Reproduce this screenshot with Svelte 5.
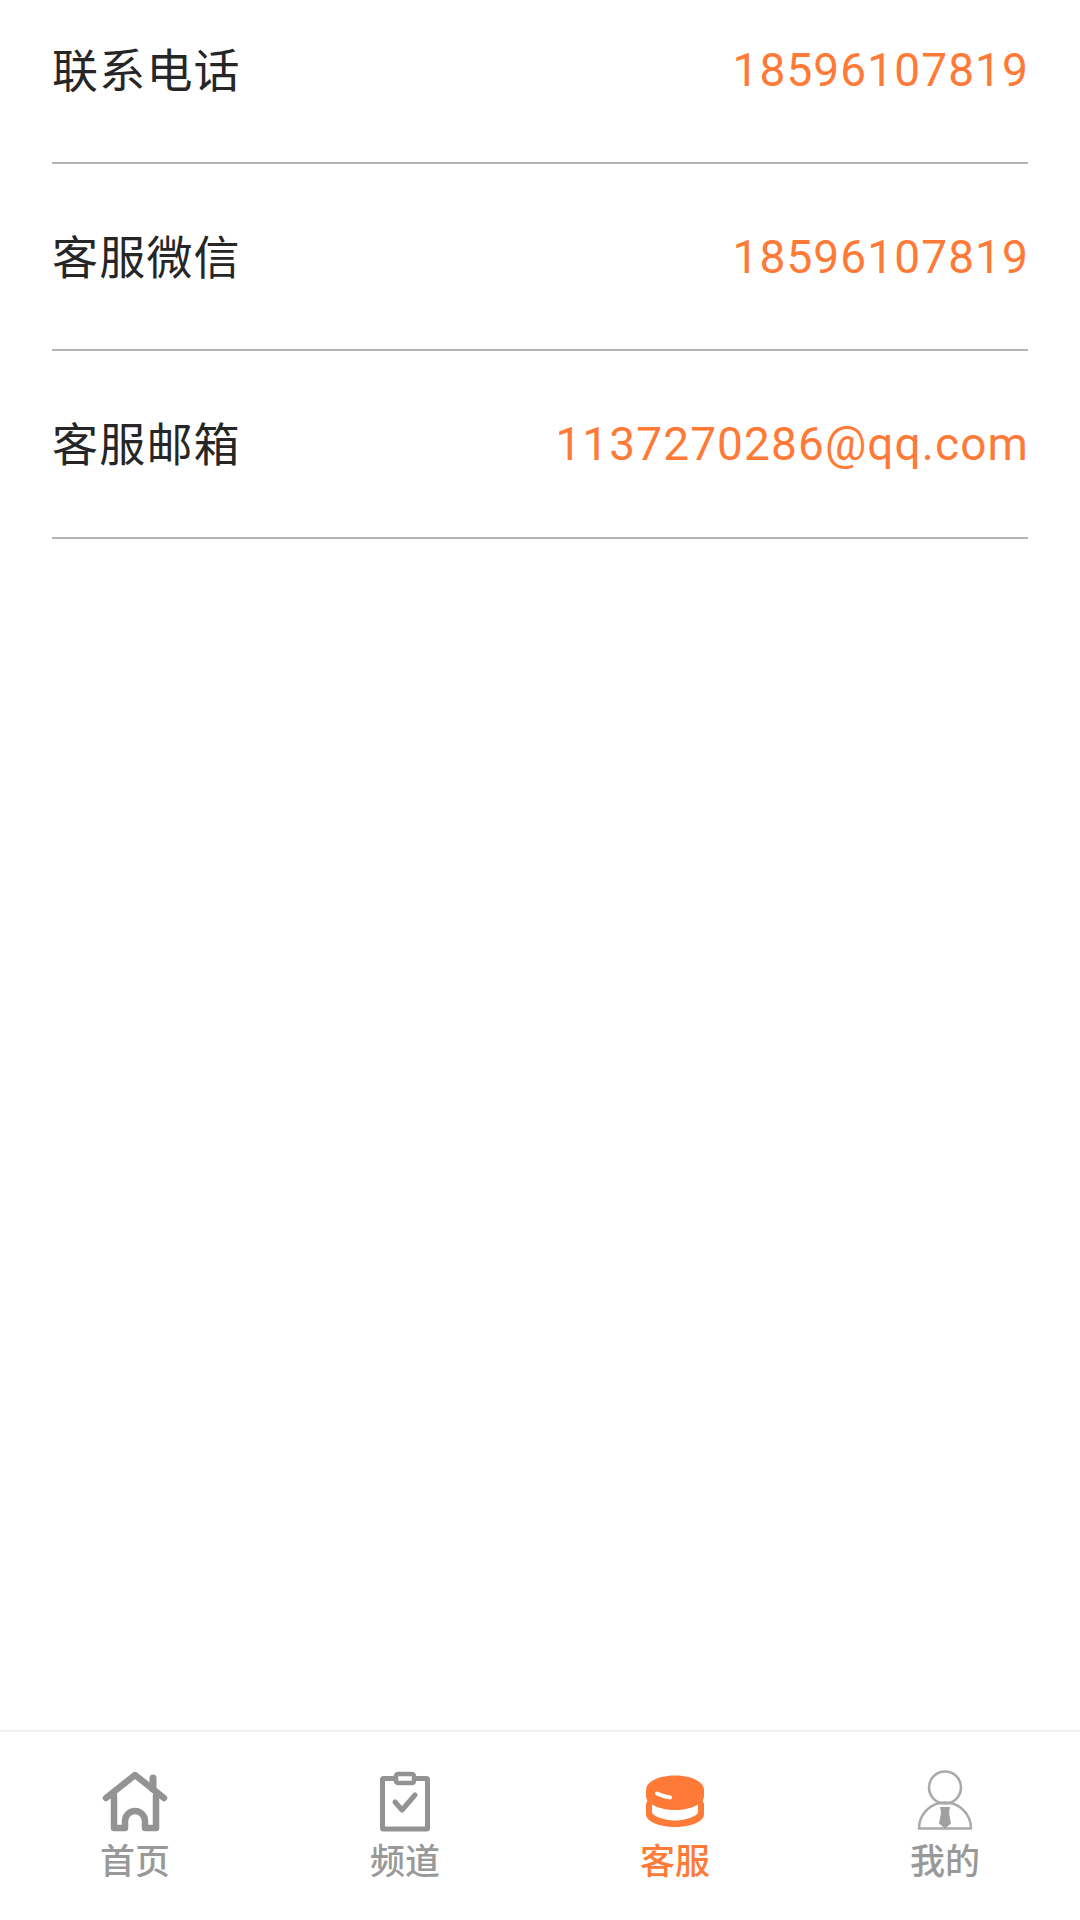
<script>
  const rows = [
    { label: '联系电话', value: '18596107819' },
    { label: '客服微信', value: '18596107819' },
    { label: '客服邮箱', value: '1137270286@qq.com' }
  ];
</script>

<div class="page">
  <main class="list">
    {#each rows as row}
      <div class="row">
        <span class="label">{row.label}</span>
        <span class="value">{row.value}</span>
      </div>
    {/each}
  </main>

  <nav class="tabs">
    <div class="tab">
      <svg viewBox="0 0 66 66" width="66" height="66" fill="none" stroke="#939393" stroke-width="6.5" stroke-linecap="round" stroke-linejoin="round">
        <path d="M4 29 L33 6 L62 29" />
        <path d="M12 27 V59 H23 V52 a10 10 0 0 1 20 0 V59 H54 V27" />
        <path d="M51 9 V20" stroke-width="7" />
      </svg>
      <span>首页</span>
    </div>
    <div class="tab">
      <svg viewBox="0 0 66 66" width="66" height="66" fill="none" stroke="#939393" stroke-linecap="round" stroke-linejoin="round">
        <rect x="10.5" y="9.5" width="45" height="50.5" rx="1" stroke-width="5" />
        <rect x="24" y="5" width="18" height="9" rx="2" fill="#fff" stroke-width="4.5" />
        <path d="M23 33 L30 41 L43 26" stroke-width="5" />
      </svg>
      <span>频道</span>
    </div>
    <div class="tab active">
      <svg viewBox="0 0 66 66" width="66" height="66">
        <path d="M6 30 L4 35 V45 C4 53 18 58 33 58 C48 58 62 53 62 45 V35 L60 30 Z" fill="#ff7a37" />
        <path d="M10 33 H56 V43 C56 47 44 51.5 33 51.5 C22 51.5 10 47 10 43 Z" fill="#fff" />
        <path d="M4 21 C4 12 18 6.5 33 6.5 C48 6.5 62 12 62 21 V27 C62 35 48 41 33 41 C18 41 4 35 4 27 Z" fill="#ff7a37" />
        <path d="M15 24.5 Q21 27.5 28 28.5" fill="none" stroke="#fff" stroke-width="4" stroke-linecap="round" />
      </svg>
      <span>客服</span>
    </div>
    <div class="tab">
      <svg viewBox="0 0 66 66" width="66" height="66" fill="none" stroke="#aaa" stroke-width="2.6">
        <circle cx="33" cy="18.5" r="16" />
        <path d="M7 59.5 A26 26 0 0 1 59 59.5 Z" stroke-linejoin="round" />
        <path d="M28 38 H38 L37 44 L39 54.5 L33 59.5 L27 54.5 L29 44 Z" fill="#a0a0a0" stroke="none" />
      </svg>
      <span>我的</span>
    </div>
  </nav>
</div>

<style>
  :global(body) {
    margin: 0;
    background: #fff;
  }
  .page {
    width: 1080px;
    height: 1920px;
    display: flex;
    flex-direction: column;
    font-family: Roboto, "Noto Sans CJK SC", sans-serif;
    overflow: hidden;
  }
  .list {
    flex: 1;
    padding: 0 52px;
  }
  .row {
    height: 185.3px;
    display: flex;
    align-items: center;
    justify-content: space-between;
    border-bottom: 2px solid #b4b4b4;
  }
  .row:first-child {
    height: 139px;
    padding-bottom: 23px;
  }
  .label {
    color: #262626;
    font-size: 46px;
    letter-spacing: 1.2px;
    padding-bottom: 5px;
  }
  .value {
    color: #ff7a37;
    font-size: 46px;
    letter-spacing: 1.1px;
    margin-right: -1px;
  }
  .tabs {
    height: 190.5px;
    border-top: 2px solid #f2f2f2;
    box-sizing: border-box;
    display: grid;
    grid-template-columns: repeat(4, 270px);
    padding-top: 37px;
  }
  .tab {
    display: flex;
    flex-direction: column;
    align-items: center;
    color: #999;
    font-size: 35px;
    font-weight: 500;
    line-height: 46px;
    gap: 5px;
  }
  .tab.active {
    color: #ff7a37;
  }
  svg {
    display: block;
  }
</style>
